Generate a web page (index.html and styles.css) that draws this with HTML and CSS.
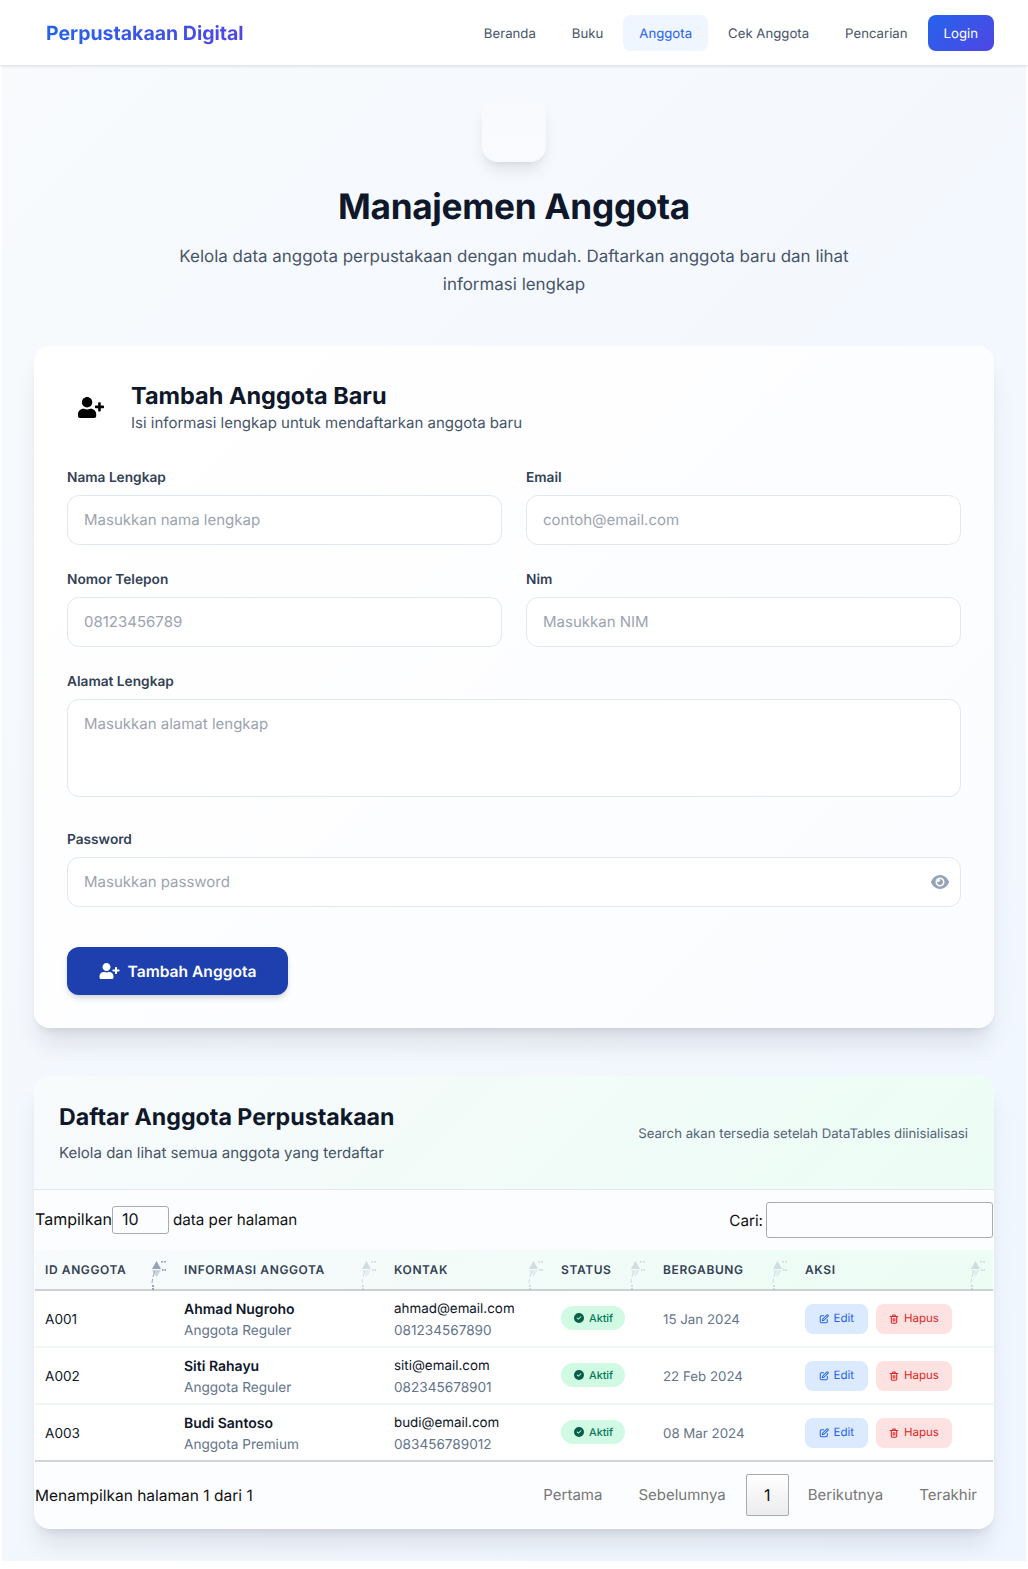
FILE: index.html
```html
<!DOCTYPE html>
<html lang="id">
<head>
<meta charset="utf-8">
<title>Manajemen Anggota</title>
<link rel="stylesheet" href="styles.css">
</head>
<body>
<svg class="defs" width="0" height="0" aria-hidden="true">
  <symbol id="user-plus" viewBox="0 0 640 512"><path d="M624 208h-64v-64c0-8.800-7.200-16-16-16h-32c-8.800 0-16 7.200-16 16v64h-64c-8.800 0-16 7.200-16 16v32c0 8.800 7.200 16 16 16h64v64c0 8.800 7.200 16 16 16h32c8.800 0 16-7.200 16-16v-64h64c8.800 0 16-7.200 16-16v-32c0-8.800-7.200-16-16-16zm-400 48c70.700 0 128-57.300 128-128S294.700 0 224 0 96 57.300 96 128s57.300 128 128 128zm89.600 32h-16.700c-22.200 10.200-46.900 16-72.900 16s-50.600-5.800-72.900-16h-16.700C60.200 288 0 348.200 0 422.400V464c0 26.500 21.500 48 48 48h352c26.500 0 48-21.500 48-48v-41.600c0-74.200-60.200-134.400-134.400-134.400z"/></symbol>
  <symbol id="check" viewBox="0 0 512 512"><path d="M256 512a256 256 0 1 0 0-512 256 256 0 1 0 0 512zm113-303L241 337c-9.400 9.400-24.600 9.400-33.900 0l-64-64c-9.400-9.400-9.400-24.600 0-33.900s24.600-9.400 33.900 0l47 47 111-111c9.400-9.400 24.600-9.400 33.900 0s9.400 24.600 0 33.900z"/></symbol>
  <symbol id="edit" viewBox="0 0 24 24"><path fill="none" stroke="currentColor" stroke-width="2.500" stroke-linecap="round" stroke-linejoin="round" d="M11 4H6a3 3 0 0 0-3 3v11a3 3 0 0 0 3 3h11a3 3 0 0 0 3-3v-5M18.500 2.500a2.100 2.100 0 0 1 3 3L12 15l-4 1 1-4z"/></symbol>
  <symbol id="trash" viewBox="0 0 24 24"><path fill="none" stroke="currentColor" stroke-width="2.600" stroke-linecap="round" stroke-linejoin="round" d="M3 6h18M9 5V2.500h6V5M5.500 6v13a3 3 0 0 0 3 3h7a3 3 0 0 0 3-3V6M10 11v6M14 11v6"/></symbol>
  <symbol id="sort" viewBox="0 0 16 30"><path class="up" d="M4.500 0l4.500 8h-9z" transform="translate(1 1)"/><path class="down" d="M0 9h9l-4.500 7z" transform="translate(1 1)" opacity=".45"/><path class="dots" d="M10 1h2v1.500h-2zM13 1h2v1.500h-2zM11 9h1.500v2h-1.500zM13.500 9h1.500v2h-1.500zM3 11h1l-1.500 6h-1zM1 19h1l-.5 4h-1zM1 25h2v2h-2zM1 28h2v2h-2z"/></symbol>
</svg>

<div class="page">
  <nav class="nav">
    <a class="brand">Perpustakaan Digital</a>
    <div class="nav-links">
      <a class="nav-link">Beranda</a>
      <a class="nav-link">Buku</a>
      <a class="nav-link active">Anggota</a>
      <a class="nav-link">Cek Anggota</a>
      <a class="nav-link">Pencarian</a>
      <a class="nav-login">Login</a>
    </div>
  </nav>

  <main class="main">
    <header class="hero">
      <div class="hero-icon"></div>
      <h1 class="hero-title">Manajemen Anggota</h1>
      <p class="hero-sub">Kelola data anggota perpustakaan dengan mudah. Daftarkan anggota baru dan lihat informasi lengkap</p>
    </header>

    <section class="card form-card">
      <div class="form-head">
        <div class="form-head-icon"><svg class="ico-user-lg"><use href="#user-plus"/></svg></div>
        <div>
          <h2 class="form-title">Tambah Anggota Baru</h2>
          <p class="form-sub">Isi informasi lengkap untuk mendaftarkan anggota baru</p>
        </div>
      </div>
      <form class="form-grid">
        <div class="field"><label class="label">Nama Lengkap</label><input class="input" placeholder="Masukkan nama lengkap"></div>
        <div class="field"><label class="label">Email</label><input class="input" placeholder="contoh@email.com"></div>
        <div class="field"><label class="label">Nomor Telepon</label><input class="input" placeholder="08123456789"></div>
        <div class="field"><label class="label">Nim</label><input class="input" placeholder="Masukkan NIM"></div>
        <div class="field wide"><label class="label">Alamat Lengkap</label><textarea class="input area" placeholder="Masukkan alamat lengkap"></textarea></div>
        <div class="field wide pw"><label class="label">Password</label>
          <div class="pw-wrap"><input class="input" placeholder="Masukkan password">
            <svg class="eye" viewBox="0 0 576 512"><path d="M288 32c-80.800 0-145.500 36.800-192.600 80.600C48.600 156 17.300 208 2.500 243.700c-3.300 7.900-3.300 16.700 0 24.600C17.300 304 48.600 356 95.400 399.400 142.500 443.200 207.200 480 288 480s145.500-36.800 192.600-80.600c46.800-43.500 78.100-95.400 93-131.100 3.300-7.900 3.300-16.700 0-24.600-14.900-35.700-46.200-87.700-93-131.100C433.500 68.800 368.800 32 288 32zM144 256a144 144 0 1 1 288 0 144 144 0 1 1-288 0zm144-64c0 35.300-28.700 64-64 64-7.100 0-13.900-1.200-20.300-3.300-5.500-1.800-11.900 1.600-11.700 7.400.3 6.900 1.300 13.800 3.200 20.700 13.700 51.200 66.400 81.600 117.600 67.900s81.600-66.400 67.900-117.600c-11.100-41.500-47.800-69.400-88.600-71.100-5.800-.2-9.200 6.100-7.400 11.700 2.100 6.400 3.300 13.200 3.300 20.300z"/></svg>
          </div>
        </div>
        <div class="wide"><button type="button" class="submit"><svg class="ico-user-btn"><use href="#user-plus"/></svg>Tambah Anggota</button></div>
      </form>
    </section>

    <section class="card list-card">
      <div class="list-head">
        <div>
          <h2 class="list-title">Daftar Anggota Perpustakaan</h2>
          <p class="list-sub">Kelola dan lihat semua anggota yang terdaftar</p>
        </div>
        <p class="list-note">Search akan tersedia setelah DataTables diinisialisasi</p>
      </div>

      <div class="dt-top">
        <div class="dt-length"><span class="dt-label">Tampilkan</span><span class="dt-select">10</span><span class="dt-label dt-tail">data per halaman</span></div>
        <div class="dt-search">Cari:<input class="dt-input"></div>
      </div>

      <table class="table">
        <colgroup><col class="c1"><col class="c2"><col class="c3"><col class="c4"><col class="c5"><col class="c6"></colgroup>
        <thead>
          <tr>
            <th>ID Anggota<svg class="sort first"><use href="#sort"/></svg></th>
            <th>Informasi Anggota<svg class="sort"><use href="#sort"/></svg></th>
            <th>Kontak<svg class="sort"><use href="#sort"/></svg></th>
            <th>Status<svg class="sort"><use href="#sort"/></svg></th>
            <th>Bergabung<svg class="sort"><use href="#sort"/></svg></th>
            <th>Aksi<svg class="sort"><use href="#sort"/></svg></th>
          </tr>
        </thead>
        <tbody>
          <tr>
            <td class="id">A001</td>
            <td><div class="name">Ahmad Nugroho</div><div class="muted">Anggota Reguler</div></td>
            <td><div class="email">ahmad@email.com</div><div class="muted">081234567890</div></td>
            <td><span class="badge"><svg class="ico-check"><use href="#check"/></svg>Aktif</span></td>
            <td class="date">15 Jan 2024</td>
            <td><div class="actions"><a class="btn edit"><svg class="ico-btn"><use href="#edit"/></svg>Edit</a><a class="btn del"><svg class="ico-btn"><use href="#trash"/></svg>Hapus</a></div></td>
          </tr>
          <tr>
            <td class="id">A002</td>
            <td><div class="name">Siti Rahayu</div><div class="muted">Anggota Reguler</div></td>
            <td><div class="email">siti@email.com</div><div class="muted">082345678901</div></td>
            <td><span class="badge"><svg class="ico-check"><use href="#check"/></svg>Aktif</span></td>
            <td class="date">22 Feb 2024</td>
            <td><div class="actions"><a class="btn edit"><svg class="ico-btn"><use href="#edit"/></svg>Edit</a><a class="btn del"><svg class="ico-btn"><use href="#trash"/></svg>Hapus</a></div></td>
          </tr>
          <tr>
            <td class="id">A003</td>
            <td><div class="name">Budi Santoso</div><div class="muted">Anggota Premium</div></td>
            <td><div class="email">budi@email.com</div><div class="muted">083456789012</div></td>
            <td><span class="badge"><svg class="ico-check"><use href="#check"/></svg>Aktif</span></td>
            <td class="date">08 Mar 2024</td>
            <td><div class="actions"><a class="btn edit"><svg class="ico-btn"><use href="#edit"/></svg>Edit</a><a class="btn del"><svg class="ico-btn"><use href="#trash"/></svg>Hapus</a></div></td>
          </tr>
        </tbody>
      </table>

      <div class="dt-bottom">
        <div class="dt-info">Menampilkan halaman 1 dari 1</div>
        <div class="pager">
          <a class="page-btn">Pertama</a>
          <a class="page-btn">Sebelumnya</a>
          <a class="page-cur">1</a>
          <a class="page-btn">Berikutnya</a>
          <a class="page-btn">Terakhir</a>
        </div>
      </div>
    </section>
  </main>
</div>
</body>
</html>
```
FILE: styles.css
```css
* { box-sizing: border-box; text-rendering: geometricPrecision; }
html, body { margin: 0; padding: 0; background: #fff; }
body { font-family: Inter, "Liberation Sans", sans-serif; color: #0f172a; }
.defs { position: absolute; }
.page { height: 1561px; margin: 0 2px; background: linear-gradient(135deg, #f8fafc 0%, #eff6ff 100%); }

.nav { height: 65px; margin: 0 -2px; padding: 0 34px 0 46px; display: flex; align-items: center; justify-content: space-between; background: #fff; box-shadow: 0 1px 3px rgba(15,23,42,.14); }
.brand { font-size: 19.5px; font-weight: 700; background: linear-gradient(90deg, #2563eb, #4f46e5); -webkit-background-clip: text; background-clip: text; color: transparent; }
.nav-links { display: flex; align-items: center; gap: 4px; }
.nav-link { padding: 0 16px; height: 36px; line-height: 38px; font-size: 13.2px; color: #475569; border-radius: 8px; }
.nav-link.active { color: #2563eb; background: #eff6ff; }
.nav-login { padding: 0 16px; height: 36px; line-height: 38px; font-size: 13.2px; color: #fff; border-radius: 8px; background: linear-gradient(135deg, #2563eb, #4f46e5); }

.main { width: 960px; margin: 0 auto; padding-top: 33px; }
.hero { text-align: center; }
.hero-icon { width: 64px; height: 64px; margin: 0 auto; border-radius: 16px; background: linear-gradient(180deg, #f7f9fc, #fafbfe); box-shadow: 0 10px 15px -3px rgba(15,23,42,.1), 0 4px 6px -4px rgba(15,23,42,.08); }
.hero-title { margin: 21px 0 0; font-size: 35.2px; line-height: 48px; font-weight: 700; letter-spacing: -.3px; color: #0f172a; }
.hero-sub { width: 672px; margin: 12px auto 0; font-size: 16.95px; line-height: 28px; color: #475569; }

.card { background: #fff; border-radius: 16px; box-shadow: 0 20px 25px -5px rgba(15,23,42,.1), 0 8px 10px -6px rgba(15,23,42,.1); }
.form-card { margin-top: 47px; height: 682px; padding: 35px 33px 33px; background: linear-gradient(135deg, #fff, #fbfcff); }
.form-head { display: flex; align-items: center; gap: 16px; height: 52px; margin-bottom: 34px; }
.form-head-icon { width: 48px; height: 48px; display: flex; align-items: center; justify-content: center; }
.ico-user-lg { width: 26px; height: 21px; fill: #000; }
.form-title { margin: 0 0 2px; font-size: 23.5px; line-height: 30px; font-weight: 700; color: #0f172a; }
.form-sub { margin: 0; font-size: 15px; line-height: 20px; color: #475569; }

.form-grid { display: grid; grid-template-columns: 1fr 1fr; column-gap: 24px; row-gap: 24px; }
.wide { grid-column: 1 / -1; }
.field { display: flex; flex-direction: column; }
.label { padding-top: 1px; margin-bottom: 7px; font-size: 13.7px; line-height: 20px; font-weight: 600; color: #334155; }
.input { display: block; width: 100%; height: 50px; padding: 0 16px 1px; font: 400 15px Inter, sans-serif; color: #0f172a; background: #fff; border: 1px solid #e2e8f0; border-radius: 12px; outline: none; }
.input::placeholder { color: #9ca3af; opacity: 1; }
.area { height: 98px; padding-top: 14px; resize: none; line-height: 20px; }
.pw { margin-top: 8px; }
.pw-wrap { position: relative; }
.eye { position: absolute; right: 12px; top: 16px; width: 18px; height: 18px; fill: #94a3b8; }
.submit { width: 221px; height: 48px; margin-top: 16px; display: flex; align-items: center; justify-content: center; gap: 8px; font: 600 15.6px Inter, sans-serif; color: #fff; background: #1e40af; border: 0; border-radius: 12px; box-shadow: 0 4px 6px -1px rgba(15,23,42,.15), 0 2px 4px -2px rgba(15,23,42,.1); }
.ico-user-btn { width: 21px; height: 16px; fill: #fff; }

.list-card { margin-top: 48px; height: 453px; overflow: hidden; background: #fcfdff; }
.list-head { height: 114px; padding: 25px 26px 0 25px; display: flex; justify-content: space-between; align-items: flex-start; background: linear-gradient(135deg, #f8fafc, #ecfdf5); border-bottom: 1px solid #e2e8f0; }
.list-title { margin: 0; font-size: 23.2px; line-height: 32px; font-weight: 700; color: #0f172a; }
.list-sub { margin: 8px 0 0; font-size: 15px; line-height: 24px; color: #475569; }
.list-note { margin: 23px 0 0; font-size: 13.2px; line-height: 20px; color: #556377; }

.dt-top { height: 60px; padding: 0 1px; display: flex; align-items: center; justify-content: space-between; color: #111; }
.dt-length { display: flex; align-items: center; font-size: 16px; }
.dt-label { padding-bottom: 2px; }
.dt-select { width: 57px; height: 28px; padding-left: 9px; line-height: 25px; border: 1px solid #aaa; border-radius: 3px; }
.dt-tail { margin-left: 4px; font-size: 15.2px; }
.dt-search { display: flex; align-items: center; gap: 3px; font-size: 15.2px; }
.dt-input { width: 227px; height: 36px; border: 1px solid #aaa; border-radius: 3px; background: transparent; outline: none; }

.table { width: 958px; margin-left: 1px; border-collapse: separate; border-spacing: 0; table-layout: fixed; background: linear-gradient(135deg, #f8fafc, #ecfdf5) no-repeat 0 0 / 100% 41px; }
.c1 { width: 139px; } .c2 { width: 210px; } .c3 { width: 167px; } .c4 { width: 102px; } .c5 { width: 142px; } .c6 { width: 198px; }
.table th { position: relative; height: 41px; padding: 0 10px; text-align: left; font-size: 12px; font-weight: 600; letter-spacing: .6px; text-transform: uppercase; color: #334155; border-bottom: 2px solid #cbd0d3; }
.sort { position: absolute; right: 7px; top: 10px; width: 16px; height: 30px; fill: #94a3b8; opacity: .35; }
.sort.first { opacity: 1; }
.table td { height: 57px; padding: 4px 10px 0; font-size: 14px; line-height: 21px; color: #0f172a; background: #fff; border-bottom: 2px solid #f1f5f9; vertical-align: middle; }
.table td:nth-child(4), .table td:nth-child(6) { padding-top: 1px; }
.table tbody tr:last-child td { border-bottom-color: #d0d3d8; }
.name { font-weight: 600; color: #0f172a; }
.table td .muted { margin-top: 1px; font-size: 13.6px; color: #64748b; }
.table td.id { font-size: 13.6px; }
.table td.date { font-size: 13.3px; color: #64748b; }
.email { font-size: 13.4px; }
.badge { display: inline-flex; align-items: center; gap: 5px; height: 24px; padding: 0 12px 0 13px; border-radius: 12px; font-size: 10.8px; font-weight: 500; color: #047857; background: #d1fae5; position: relative; top: -1px; }
.ico-check { width: 10px; height: 10px; fill: #065f46; }
.actions { display: flex; gap: 8px; }
.btn { display: inline-flex; align-items: center; gap: 5px; height: 30px; padding: 0 13.5px 1px; font-size: 11.5px; border-radius: 8px; }
.ico-btn { width: 10px; height: 10px; }
.edit { color: #2563eb; background: #dbeafe; }
.del { color: #dc2626; background: #fee2e2; }

.dt-bottom { display: flex; align-items: center; justify-content: space-between; padding: 12px 0 0 1px; color: #111; }
.dt-info { font-size: 15.5px; }
.pager { display: flex; align-items: center; margin-right: -1px; }
.page-btn { padding: 0 18px 2px; color: #777; font-size: 15px; }
.page-cur { width: 43px; height: 42px; line-height: 40px; margin: 0 1px 0 2px; text-align: center; font-size: 16px; color: #111; border: 1px solid #aaa; border-radius: 2px; background: linear-gradient(#fff, #ececec); }
```
